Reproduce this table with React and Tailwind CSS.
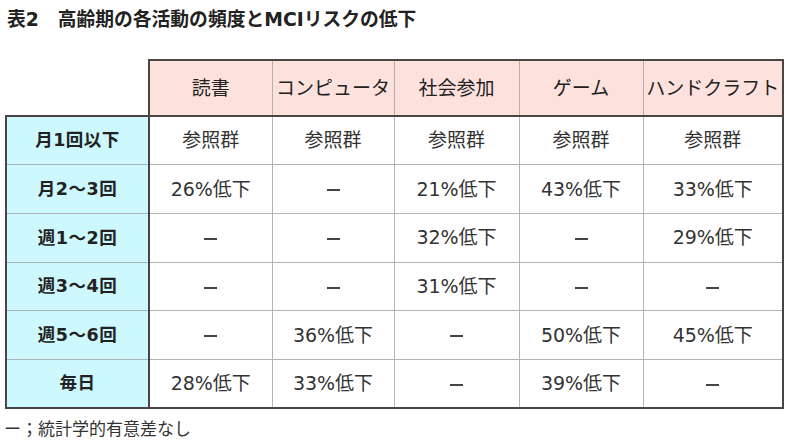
import React from "react";

const cols = ["読書", "コンピュータ", "社会参加", "ゲーム", "ハンドクラフト"];
const widths = ["w-[123px]", "w-[122px]", "w-[125px]", "w-[124px]", "w-[140px]"];
const rows = [
  ["月1回以下", ["参照群", "参照群", "参照群", "参照群", "参照群"]],
  ["月2～3回", ["26%低下", "–", "21%低下", "43%低下", "33%低下"]],
  ["週1～2回", ["–", "–", "32%低下", "–", "29%低下"]],
  ["週3～4回", ["–", "–", "31%低下", "–", "–"]],
  ["週5～6回", ["–", "36%低下", "–", "50%低下", "45%低下"]],
  ["毎日", ["28%低下", "33%低下", "–", "39%低下", "–"]],
];

export default function App() {
  return (
    <div className="w-[788px] h-[446px] bg-white overflow-hidden font-['DejaVu_Sans','Noto_Sans_CJK_JP',sans-serif] text-[#222]">
      <div className="pl-[7px] pt-[7px] h-[59px] text-[18.8px] font-bold leading-[26px]">表2　高齢期の各活動の頻度とMCIリスクの低下</div>
      <table className="ml-[5px] border-collapse table-fixed">
        <thead>
          <tr className="h-[56px]">
            <th className="w-[143px] p-0"></th>
            {cols.map((c, i) => (
              <th
                key={c}
                className={`${widths[i]} p-0 bg-[#fde1dc] border-t-2 border-t-[#4a4545] ${i === 0 ? "border-l-2 border-l-[#4a4545]" : "border-l border-l-[#b8b0b0]"} ${i === 4 ? "border-r-2 border-r-[#4a4545]" : ""} border-b-2 border-b-[#4a4545] text-[19px] font-normal text-[#222] text-center whitespace-nowrap`}
              >
                {c}
              </th>
            ))}
          </tr>
        </thead>
        <tbody>
          {rows.map(([label, vals], r) => (
            <tr key={label} className="h-[48.7px]">
              <td className={`p-0 bg-[#cdf8fd] border-l-2 border-l-[#4a4545] border-r-2 border-r-[#4a4545] ${r === 0 ? "border-t-2 border-t-[#4a4545]" : "border-t border-t-[#a9b4b6]"} ${r === 5 ? "border-b-2 border-b-[#4a4545]" : ""} text-center text-[17.5px] font-bold text-[#222] tracking-[0.5px]`}>
                {label}
              </td>
              {vals.map((v, i) => (
                <td
                  key={i}
                  className={`p-0 text-center text-[19px] text-[#333] ${r === 0 ? "" : "border-t border-t-[#b5b5b5]"} ${i === 4 ? "border-r-2 border-r-[#4a4545]" : "border-r border-r-[#b5b5b5]"} ${r === 5 ? "border-b-2 border-b-[#4a4545]" : ""}`}
                >
                  {v === "–" ? <span className="inline-block w-[13px] h-[2px] bg-[#444] align-middle"></span> : v}
                </td>
              ))}
            </tr>
          ))}
        </tbody>
      </table>
      <div className="pl-[4px] pt-[8px] text-[17px] leading-[24px] text-[#333]">ー；統計学的有意差なし</div>
    </div>
  );
}
